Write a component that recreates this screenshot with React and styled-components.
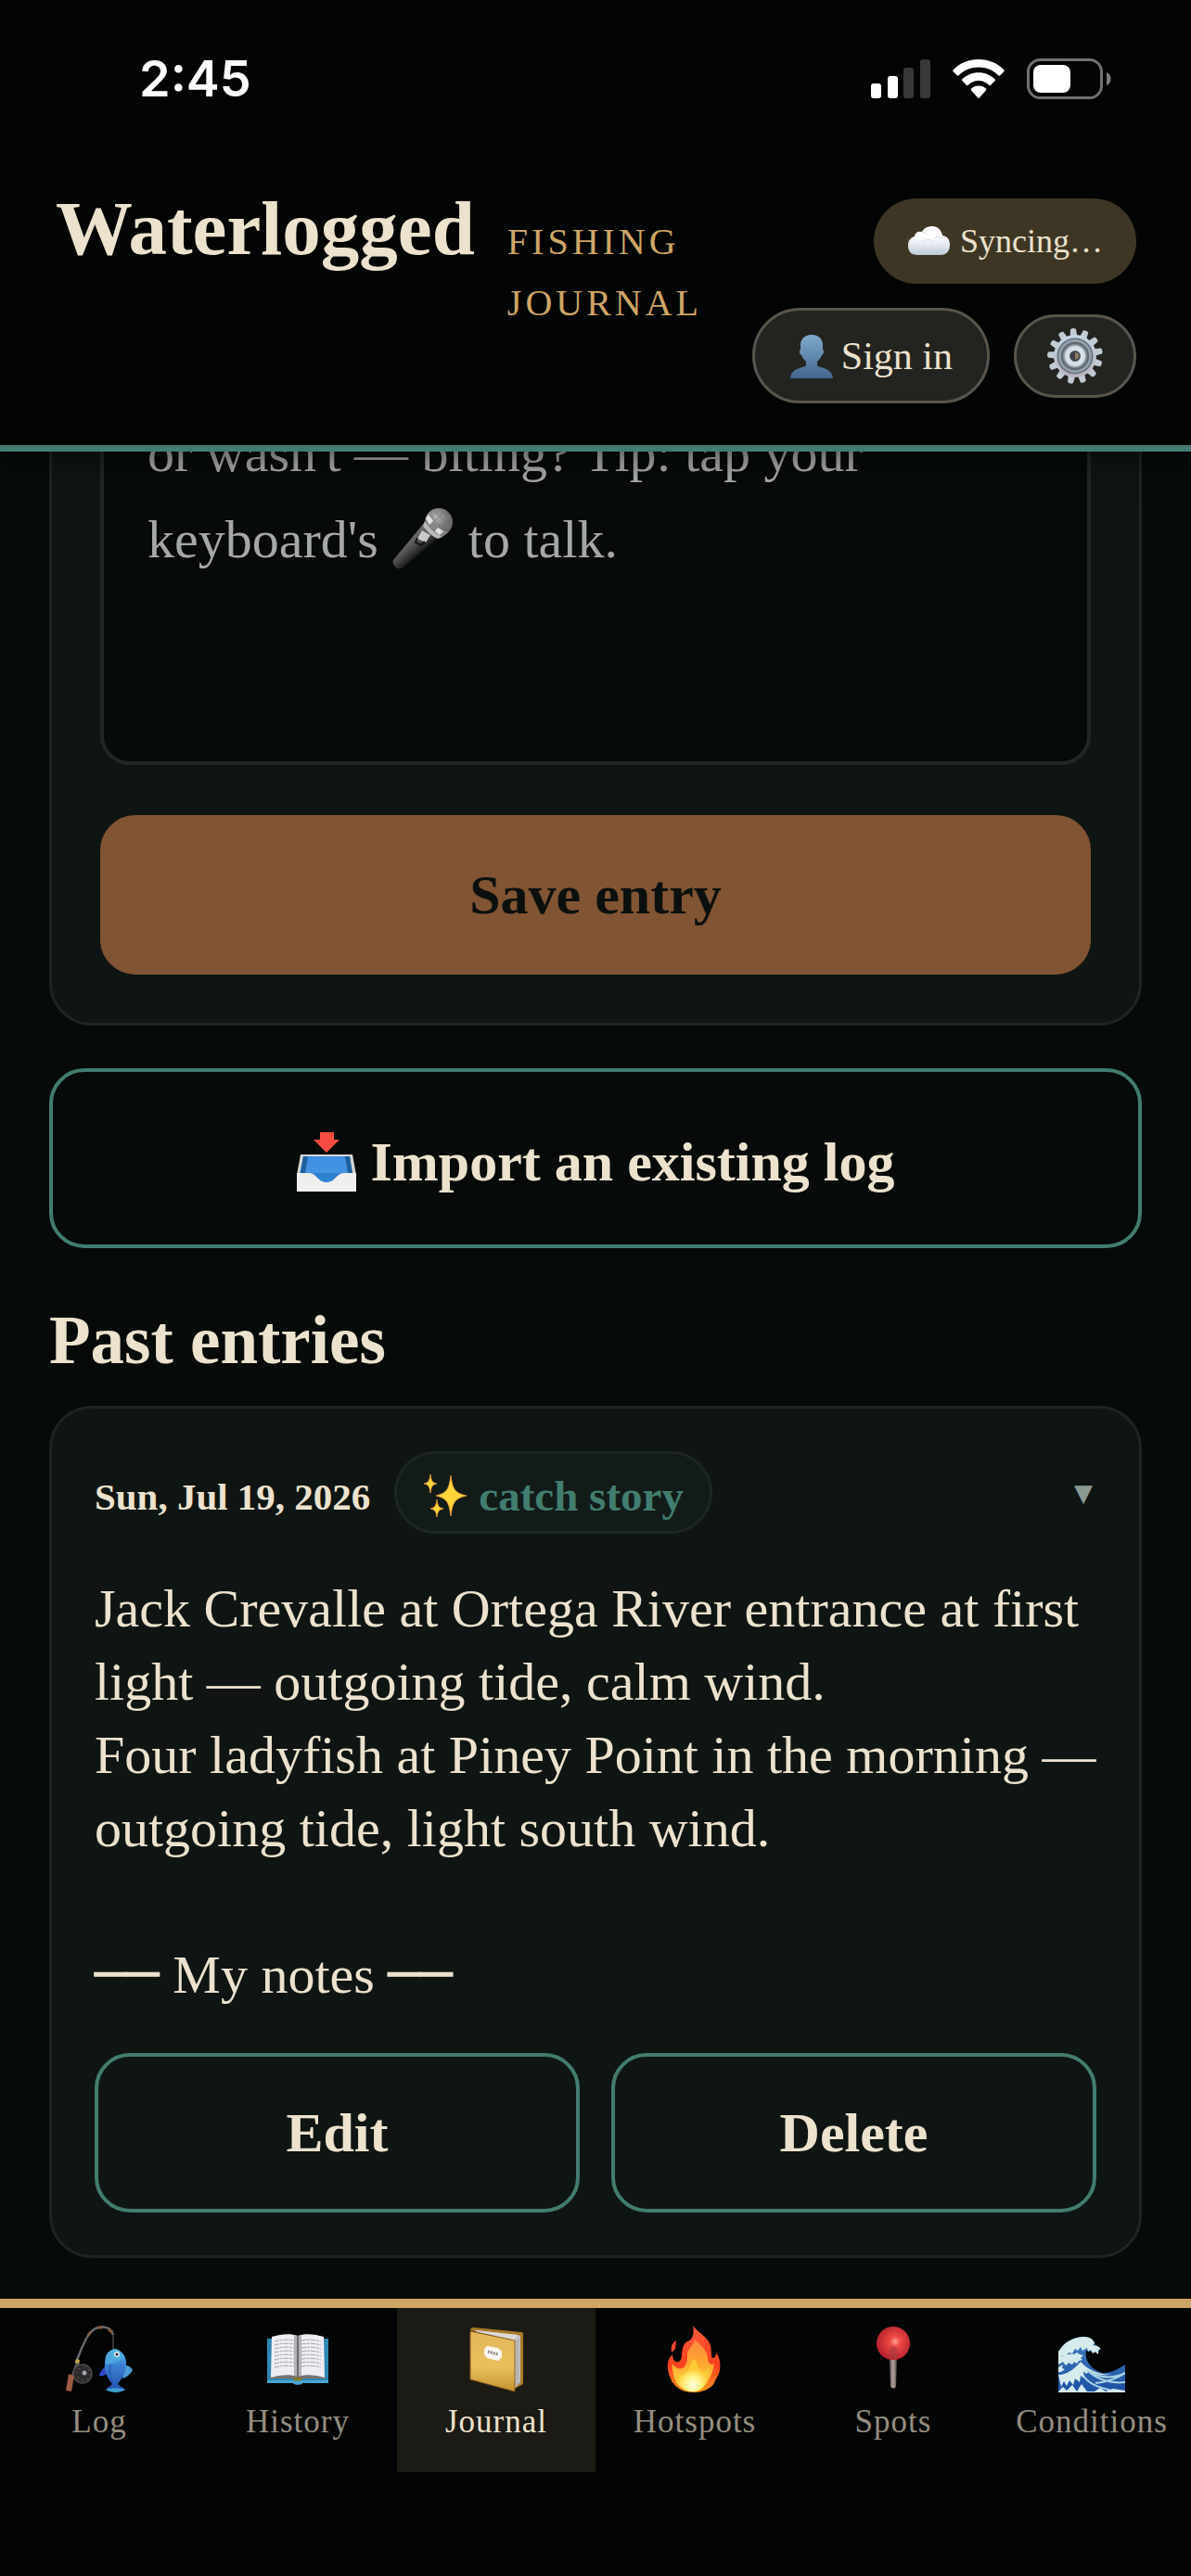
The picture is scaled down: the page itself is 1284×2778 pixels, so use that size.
import React, { useState } from 'react';
import styled, { createGlobalStyle } from 'styled-components';

const GlobalStyle = createGlobalStyle`
   *, *::before, *::after {
      box-sizing: border-box;
   }
   body {
      margin: 0;
      background: #060a09;
   }
   button, textarea {
      font: inherit;
      color: inherit;
      margin: 0;
   }
   svg {
      display: block;
      flex-shrink: 0;
   }
`

const Shell = styled.div`
   display: flex;
   flex-direction: column;
   height: 100vh;
   overflow: hidden;
   background: #060a09;
   color: #ece2cd;
   font-family: "Liberation Serif", "Times New Roman", serif;
`

/* ---------- header ---------- */

const Header = styled.header`
   position: relative;
   z-index: 1;
   background: #030504;
   border-bottom: 7px solid #427d6f;
   box-shadow: 0 6px 30px rgba(0, 0, 0, 0.5);
`
const StatusBar = styled.div`
   display: flex;
   align-items: center;
   justify-content: space-between;
   height: 170px;
   padding: 0 86px 0 150px;
   color: #fff;
   font: 600 54px/64px Inter, sans-serif;
`
const StatusIcons = styled.div`
   display: flex;
   align-items: center;
   gap: 24px;
`
const HeaderRow = styled.div`
   display: flex;
   align-items: flex-start;
   justify-content: space-between;
   padding: 44px 59px 45px 60px;
`
const Brand = styled.div`
   display: flex;
   align-items: baseline;
   gap: 35px;
`
const Title = styled.h1`
   margin: 0;
   font-size: 83px;
   line-height: 64px;
   font-weight: 700;
`
const Tagline = styled.span`
   width: min-content;
   color: #cfa666;
   font-size: 40px;
   line-height: 66px;
   letter-spacing: 4px;
   text-transform: uppercase;
`
const Actions = styled.div`
   display: flex;
   flex: 0 1 440px;
   flex-wrap: wrap;
   align-items: center;
   justify-content: flex-end;
   gap: 26px;
`
const SyncPill = styled.div`
   display: flex;
   align-items: center;
   gap: 10px;
   height: 92px;
   padding: 0 36px;
   border-radius: 46px;
   background: #3e3624;
   font-size: 36px;
   line-height: 48px;
`
const PillButton = styled.button`
   display: flex;
   align-items: center;
   justify-content: center;
   gap: 8px;
   height: ${props => props.$icon ? 90 : 103}px;
   padding: 0 ${props => props.$icon ? 32 : 37}px;
   border: 3px solid #59554b;
   border-radius: 52px;
   background: #232420;
   font-size: 42px;
   line-height: 48px;
`

/* ---------- content ---------- */

const Main = styled.main`
   display: flex;
   flex: 1;
   flex-direction: column;
   justify-content: flex-end;
   min-height: 0;
   overflow: hidden;
   padding: 0 53px 44px;
`
const Card = styled.section`
   flex-shrink: 0;
   padding: ${props => props.$pad}px;
   border: 3px solid #1d2523;
   border-radius: 46px;
   background: #0f1513;
`
const Field = styled.div`
   position: relative;
   margin-bottom: 54px;
   font-size: 58px;
   line-height: 93px;
`
const NoteInput = styled.textarea`
   display: block;
   width: 100%;
   height: 434px;
   padding: 47px;
   border: 4px solid #202725;
   border-radius: 32px;
   outline: none;
   background: #060a09;
   resize: none;
`
const Hint = styled.div`
   position: absolute;
   inset: 51px 47px auto 51px;
   color: #a6a8a6;
   pointer-events: none;

   svg {
      display: inline-block;
      height: 68px;
      margin: 0;
      vertical-align: -14px;
   }
`
const Button = styled.button`
   display: flex;
   flex: 1;
   align-items: center;
   justify-content: center;
   gap: 14px;
   width: 100%;
   height: 172px;
   border: 4px solid #427d6f;
   border-radius: 38px;
   background: transparent;
   font-size: 60px;
   line-height: 72px;
   font-weight: 700;
`
const SaveButton = styled(Button)`
   border-color: #815433;
   background: #815433;
   color: #0b100e;
`
const ImportButton = styled(Button)`
   flex: none;
   height: 194px;
   margin-top: 46px;
   padding-top: 8px;
`
const SectionTitle = styled.h2`
   margin: 56px 0 26px;
   font-size: 73px;
   line-height: 88px;
   font-weight: 700;
`
const EntryHead = styled.div`
   display: flex;
   align-items: center;
   gap: 26px;
   margin-bottom: 41px;
   font-weight: 700;
`
const EntryDate = styled.time`
   padding-top: 8px;
   font-size: 41px;
   line-height: 48px;
`
const Chip = styled.span`
   display: flex;
   align-items: center;
   gap: 12px;
   height: 89px;
   padding: 6px 28px 0;
   border: 3px solid #1d2624;
   border-radius: 45px;
   background: #131b19;
   color: #417e6f;
   font-size: 47px;
   line-height: 54px;
`
const Toggle = styled.button`
   margin-left: auto;
   padding: 0 4px;
   border: 0;
   background: none;
   color: #8a9a93;
   font: 26px/32px "DejaVu Sans", sans-serif;
`
const EntryText = styled.p`
   margin: 0 0 45px;
   font-size: 58px;
   line-height: 79px;
   white-space: pre-line;
`
const Rule = styled.span`
   font-family: "DejaVu Sans Mono", monospace;
   font-weight: 700;
   line-height: 0;
`
const EntryActions = styled.div`
   display: flex;
   gap: 34px;
`

/* ---------- bottom tabs ---------- */

const TabBar = styled.nav`
   display: flex;
   padding-bottom: 112px;
   border-top: 10px solid #cfa666;
   background: #030504;
`
const Tab = styled.button`
   display: flex;
   flex: 1 1 0;
   flex-direction: column;
   align-items: center;
   gap: 10px;
   padding: 19px 0 32px;
   border: 0;
   background: ${props => props.$active ? '#1c1a14' : 'transparent'};
   color: ${props => props.$active ? '#ece2cd' : '#958e80'};
   font-size: 35px;
   line-height: 44px;
   letter-spacing: 1px;
`

/* ---------- drawings ---------- */

const Signal = () => (
   <svg width="64" height="42" viewBox="0 0 64 42">
      <rect x="0" y="26" width="11" height="16" rx="3" fill="#fff" />
      <rect x="18" y="18" width="11" height="24" rx="3" fill="#fff" />
      <rect x="35" y="9" width="11" height="33" rx="3" fill="#373938" />
      <rect x="53" y="0" width="11" height="42" rx="3" fill="#373938" />
   </svg>
)

const Wifi = () => (
   <svg width="56" height="42" viewBox="0 0 56 42" fill="#fff">
      <path d="M28 0C17 0 7.500 4.200.700 11.200c-.6.600-.6 1.400 0 2l4 4c.6.600 1.400.6 2 0C12.200 11.700 19.700 8.600 28 8.600s15.800 3.100 21.300 8.600c.6.600 1.400.6 2 0l4-4c.6-.6.600-1.400 0-2C48.500 4.200 39 0 28 0z" />
      <path d="M28 14.300c-6.900 0-13 2.700-17.500 7-.6.600-.6 1.400 0 2l4.300 4.400c.6.600 1.400.6 2 0 3-2.900 6.900-4.600 11.200-4.600s8.200 1.700 11.200 4.600c.6.600 1.400.6 2 0l4.300-4.400c.6-.6.600-1.400 0-2-4.500-4.300-10.600-7-17.500-7z" />
      <path d="M28 28.600c-3 0-5.800 1.100-7.900 3-.6.500-.6 1.300 0 1.900l6.900 7.800c.6.700 1.400.7 2 0l6.900-7.800c.6-.6.600-1.400 0-1.900-2.100-1.900-4.900-3-7.900-3z" />
   </svg>
)

const Battery = () => (
   <svg width="91" height="44" viewBox="0 0 91 44">
      <rect x="1.500" y="1.500" width="79" height="41" rx="13" fill="none" stroke="#6f706f" strokeWidth="3" />
      <rect x="7" y="7" width="40" height="30" rx="8" fill="#fff" />
      <path d="M86 15c6 2 6 12 0 14z" fill="#7c7d7c" />
   </svg>
)

const Cloud = () => (
   <svg width="47" height="48" viewBox="0 0 47 48">
      <defs>
         <linearGradient id="cloud" x1="0" y1="0" x2="0" y2="1">
            <stop offset="0.400" stopColor="#fdfdfe" />
            <stop offset="1" stopColor="#bccad8" />
         </linearGradient>
      </defs>
      <path d="M11 39C4 39 1 35 1 29c0-6 3-9 7-10 0-4 4-6 8-5 2-4 6-6 11-6 6 0 10 4 11 10 6 1 8 5 8 10 0 7-4 11-10 11z" fill="url(#cloud)" />
      <path d="M17 24c3-2 8-2 11 0M30 21c3-2 6-2 8 0M16 14c2 0 4 1 5 3" fill="none" stroke="#dce4ec" strokeWidth="1.500" />
   </svg>
)

const Person = () => (
   <svg width="48" height="48" viewBox="0 0 48 48">
      <defs>
         <linearGradient id="person" x1="0" y1="0" x2="0" y2="1">
            <stop offset="0" stopColor="#7fa9cb" />
            <stop offset="1" stopColor="#43668f" />
         </linearGradient>
      </defs>
      <path d="M24 1c8 0 12 5 12 11v5c2 1 1 5-1 6-1 3-3 5-5 7v4c2 3 16 2 17 14H1c1-12 15-11 17-14v-4c-2-2-4-4-5-7-2-1-3-5-1-6v-5C12 6 16 1 24 1z" fill="url(#person)" />
   </svg>
)

const gearTeeth = [0, 1, 2, 3, 4, 5, 6, 7, 8, 9, 10, 11, 12]

const Gear = () => (
   <svg width="62" height="62" viewBox="0 0 62 62">
      <defs>
         <linearGradient id="gear" x1="0" y1="0" x2="0" y2="1">
            <stop offset="0" stopColor="#c4d7e6" />
            <stop offset="1" stopColor="#bcb3bf" />
         </linearGradient>
      </defs>
      <g fill="#c2cad4">
         {gearTeeth.map(i => (
            <path key={i} d="M27 12l1-10q3-2 6 0l1 10z" transform={`rotate(${i * 27.69 - 4} 31 31)`} />
         ))}
      </g>
      <circle cx="31" cy="31" r="23" fill="url(#gear)" />
      <circle cx="31" cy="31" r="19.500" fill="#606e79" />
      <circle cx="31" cy="31" r="18" fill="#93a0aa" />
      <circle cx="31" cy="31" r="14" fill="none" stroke="#606a74" strokeWidth="2.500" />
      <circle cx="31" cy="31" r="8.500" fill="#6d7983" stroke="#d9dfe6" strokeWidth="5" />
      <circle cx="31" cy="31" r="5.500" fill="#3f4347" />
      <path d="M31 27c3 0 5 2 4 6l-4 2z" fill="#8b7b63" />
   </svg>
)

const Microphone = () => (
   <svg width="68" height="68" viewBox="0 0 68 68" aria-hidden="true">
      <defs>
         <linearGradient id="micBody" gradientUnits="userSpaceOnUse" x1="18" y1="36" x2="30" y2="50">
            <stop offset="0" stopColor="#6a6a6a" />
            <stop offset="0.500" stopColor="#4a4949" />
            <stop offset="1" stopColor="#1b1b1b" />
         </linearGradient>
         <radialGradient id="micHead" cx="0.400" cy="0.350">
            <stop offset="0" stopColor="#b5b5b5" />
            <stop offset="1" stopColor="#686868" />
         </radialGradient>
      </defs>
      <path d="M36 16L2 57c-2 5 4 11 9 9l41-34z" fill="url(#micBody)" />
      <circle cx="51" cy="16" r="15" fill="url(#micHead)" />
      <path d="M42 8l16 20M47 4l16 18M53 2l12 13M47 25l17-17M43 19l15-16M53 28l13-13" stroke="#7b7b7b" strokeWidth="1" />
      <path d="M37 12l3-5c5 11 12 17 21 20l-6 5c-8-4-14-10-18-20z" fill="#878787" />
      <path d="M36 15l-2 5c5 7 9 11 16 14l5-2c-8-4-14-9-19-17z" fill="#b9b9b9" />
      <path d="M40 8l5 7-4 4-4-7zM50 22l6 4-4 4-5-4z" fill="#e2e2e2" />
      <path d="M33 25l9 5-5 8-9-4z" fill="#c9c9c9" />
      <path d="M28 33l-2 5 6 3 4-4" fill="none" stroke="#161616" strokeWidth="2" />
   </svg>
)

const Inbox = () => (
   <svg width="66" height="66" viewBox="0 0 66 66">
      <defs>
         <linearGradient id="inbox" x1="0" y1="0" x2="0" y2="1">
            <stop offset="0" stopColor="#3f8fe2" />
            <stop offset="0.600" stopColor="#4695e4" />
            <stop offset="0.650" stopColor="#2a7bca" />
            <stop offset="1" stopColor="#3389da" />
         </linearGradient>
      </defs>
      <path d="M26 1h15v8h6L33 23 19 9h7z" fill="#f74c42" />
      <path d="M5 25h56l4 22H1z" fill="#d3d5d3" />
      <path d="M8 27h50l3 20-16 9H21L4 46z" fill="url(#inbox)" />
      <path d="M8 27L5 45h5l3-18zM58 27l3 18h-5l-3-18z" fill="#1d5f9f" />
      <path d="M1 45h13c9 0 9 10 19 10s10-10 19-10h13v20H1z" fill="#f0efed" />
   </svg>
)

const Sparkles = () => (
   <svg width="48" height="48" viewBox="0 0 48 48" fill="#fdd43a" stroke="#e9993c" strokeWidth="0.800">
      <path d="M30 2c2 15 4 19 17 22-13 3-15 7-17 22-2-15-4-19-16-22 12-3 14-7 16-22z" />
      <path d="M8 1c1 7 2 9 7 10-5 1-6 3-7 10-1-7-2-9-7-10 5-1 6-3 7-10z" />
      <path d="M15 28c1 7 2 9 7 10-5 1-6 3-7 9-1-6-2-8-7-9 5-1 6-3 7-10z" />
   </svg>
)

const FishingPole = () => (
   <svg width="72" height="72" viewBox="0 0 72 72">
      <defs>
         <linearGradient id="fish" x1="0" y1="0" x2="0" y2="1">
            <stop offset="0" stopColor="#5cb9e6" />
            <stop offset="0.400" stopColor="#3b7fd2" />
            <stop offset="1" stopColor="#2350ae" />
         </linearGradient>
      </defs>
      <path d="M11 40C16 26 20 15 26 8c7-9 22-9 25 2" fill="none" stroke="#666a70" strokeWidth="2.500" />
      <path d="M24 10l3-3M35 2h4M46 4l4 3" stroke="#8b5a35" strokeWidth="3" />
      <path d="M51 9v18" stroke="#6a6d72" strokeWidth="1" />
      <path d="M11 39l4 1-3 9-3 6-3-2z" fill="#55585a" />
      <path d="M11 36l4 1-1 4-4-1z" fill="#c5a44b" />
      <circle cx="18" cy="52" r="10" fill="#2b2a2c" stroke="#4d4b4d" strokeWidth="1.500" />
      <circle cx="19" cy="52" r="7" fill="none" stroke="#735048" strokeWidth="1.500" strokeDasharray="1.500 4" />
      <circle cx="20" cy="51" r="2.500" fill="#9fa8b0" />
      <path d="M3 52l6 2-3 17-6-1z" fill="#9c5b42" />
      <path d="M42 44c-3 5-6 6-6 10 4 1 7-1 9-3z" fill="#3247c8" />
      <path d="M64 43c3 0 6 1 8 5-3 5-7 8-11 9z" fill="#4d9dd8" />
      <path d="M53 25c8 2 13 9 12 18-1 10-5 14-9 20 3 3 7 4 8 6-7 3-15 3-21 0 1-2 4-3 7-6-5-7-9-13-8-23 0-8 3-13 11-15z" fill="url(#fish)" />
      <path d="M43 41c1-7 3-12 10-16 5 1 7 4 10 8-5 6-12 9-20 8z" fill="#4fb0df" opacity="0.700" />
      <path d="M48 42c-2 7-1 13 3 19" fill="none" stroke="#2862b8" strokeWidth="2" />
      <path d="M43 69c5-2 16-2 21 0-6 4-15 4-21 0z" fill="#3aa0cf" />
      <circle cx="55" cy="31" r="3" fill="#e6efe9" />
      <circle cx="55" cy="31" r="1.500" fill="#1a2338" />
   </svg>
)

const bookLines = [16, 20, 24, 28, 32, 36, 40, 44]

const OpenBook = () => (
   <svg width="72" height="72" viewBox="0 0 72 72">
      <path d="M3 14h66v48H41c-1 2-9 2-10 0H3z" fill="#2f86b5" />
      <path d="M3 59h66v3H41c-1 2-9 2-10 0H3z" fill="#4aa6d2" />
      <path d="M7 53h58l1 4H42c-2 3-10 3-12 0H6z" fill="#77736e" />
      <path d="M8 12c9-3 21-4 28-1v44c-8-3-20-2-29 1z" fill="#eeedf3" />
      <path d="M64 12c-9-3-21-4-28-1v44c8-3 20-2 29 1z" fill="#eeedf3" />
      <path d="M32 10c3 0 4 1 4 2 0-1 1-2 4-2v44c-3 0-4 1-4 1s-1-1-4-1z" fill="#8d8b92" opacity="0.600" />
      <path d="M36 11v45" stroke="#55535a" strokeWidth="1.500" />
      {bookLines.map(y => (
         <path key={y} d={`M11 ${y + 1}q10-3 21-1M40 ${y}q10-2 21 1`} fill="none" stroke="#a2a0a8" strokeWidth="1" strokeDasharray="5 1 3 1" />
      ))}
      <path d="M31 58c1-3 9-3 10 0-2 3-8 3-10 0z" fill="#7e7c22" />
      <path d="M33 60q3 2 6 0" stroke="#4aa6d2" strokeWidth="3" fill="none" />
   </svg>
)

const Notebook = () => (
   <svg width="72" height="72" viewBox="0 0 72 72">
      <defs>
         <linearGradient id="cover" x1="0" y1="0" x2="0" y2="1">
            <stop offset="0" stopColor="#e3b75a" />
            <stop offset="0.600" stopColor="#e9c05c" />
            <stop offset="1" stopColor="#c4922f" />
         </linearGradient>
      </defs>
      <path d="M12 2l51 5c2 0 2 1 2 2v54l-9 5-8-5V14L8 5c0-2 2-3 4-3z" fill="#a87a2b" />
      <path d="M13 5l46 5c3 1 3 1 3 3v48l-6 6V16L15 7z" fill="#c9c8c9" />
      <path d="M13 5l46 5-4 6z" fill="#dcdad8" />
      <path d="M60 13v50M58 15v49" stroke="#9b9a9b" strokeWidth="0.800" />
      <path d="M8 6l48 10v55L8 58z" fill="url(#cover)" stroke="#8d5d20" strokeWidth="1" />
      <path d="M26 22l12 2 4 4v6l-4 4-12-3-3-4v-6z" fill="#f8f6f0" />
      <path d="M27 28l11 3" stroke="#8d8a88" strokeWidth="3" strokeDasharray="2 1" />
   </svg>
)

const Fire = () => (
   <svg width="72" height="72" viewBox="0 0 72 72">
      <defs>
         <linearGradient id="flame" x1="0" y1="0" x2="0" y2="1">
            <stop offset="0" stopColor="#ff5a36" />
            <stop offset="0.600" stopColor="#f8401f" />
            <stop offset="1" stopColor="#fc9a1c" />
         </linearGradient>
         <linearGradient id="flameMid" x1="0" y1="0" x2="0" y2="1">
            <stop offset="0" stopColor="#ff8440" />
            <stop offset="0.500" stopColor="#ffa82f" />
            <stop offset="1" stopColor="#ffe14a" />
         </linearGradient>
         <radialGradient id="flameCore" cy="0.800">
            <stop offset="0" stopColor="#fffde2" />
            <stop offset="0.500" stopColor="#fff48a" />
            <stop offset="1" stopColor="#ffc934" />
         </radialGradient>
      </defs>
      <path d="M34 0c4 6 14 11 18 19 3 7 1 13 3 16 3 0 4-3 4-6 4 5 5 12 4 18 0 5-4 9-6 15-3 5-11 10-22 10s-18-4-22-10L9 60l3 1c-4-7-6-14-5-21 1-5 3-7 5-9 0 6 3 9 6 8 7-1 1-17 10-22 5-1 8-8 6-17z" fill="url(#flame)" />
      <path d="M16 16l-1 9-4 4c-1-6 0-10 5-13z" fill="#f4482f" />
      <path d="M35 14c6 6 14 11 15 21 0 6 4 8 7 6-1 7-3 12-6 17-3 7-9 13-17 13s-18-6-20-15c-1-6-3-8-2-15 3 5 8 7 12 4 7-6 1-15 7-21 3-4 5-5 4-10z" fill="url(#flameMid)" />
      <path d="M35 36c5 5 4 11 9 13 4 1 5-1 7-3-1 15-7 25-17 25-11 0-16-8-17-20 4 4 8 2 11-2 3-4 3-8 7-13z" fill="url(#flameCore)" />
   </svg>
)

const Pin = () => (
   <svg width="72" height="72" viewBox="0 0 72 72">
      <defs>
         <radialGradient id="pin" cx="0.560" cy="0.450">
            <stop offset="0" stopColor="#ffa09a" />
            <stop offset="0.300" stopColor="#ef4a44" />
            <stop offset="1" stopColor="#bd2630" />
         </radialGradient>
         <linearGradient id="needle">
            <stop offset="0" stopColor="#5e5756" />
            <stop offset="0.500" stopColor="#b5a39e" />
            <stop offset="1" stopColor="#4b4444" />
         </linearGradient>
      </defs>
      <path d="M32 34h8l-1 32q-3 3-6 0z" fill="url(#needle)" />
      <circle cx="36" cy="19" r="18" fill="url(#pin)" />
      <path d="M32 24q4-3 8 0v11q-4 2-8 0z" fill="#a43a42" opacity="0.600" />
   </svg>
)

const Wave = () => (
   <svg width="72" height="72" viewBox="0 0 72 72">
      <defs>
         <linearGradient id="sea" x1="0" y1="0" x2="0" y2="1">
            <stop offset="0" stopColor="#3f7ebd" />
            <stop offset="1" stopColor="#1d50a3" />
         </linearGradient>
      </defs>
      <path d="M0 28C7 17 17 12 28 12c6 1 10 3 11 8l6 4-2 6-7-2-6-1c-2 10 5 21 18 24 10 0 18-5 24-9v30H0z" fill="url(#sea)" />
      <path d="M0 28C7 17 17 12 28 12c6 0 10 3 11 7l-2 2 5 1 4 3-3 1v5l-3-3-3 2-2-4-3 2-1-4-5 3-2-4-3 4-3-2-3 5-4-1-3 5-4-2-5 4z" fill="#d6ebec" />
      <path d="M0 34c4-3 6 0 8-3 4 1 6-2 9 0l3-2 3 2 4 1-3 3 2 2-4 1-2 3-3-2-2 3-4-2-3 3-3-4-5 3zM0 45l5-3-1 4 3 1-4 3H0z" fill="#d6ebec" />
      <path d="M0 53c9 0 17-6 24-14 8 9 22 15 34 13-10 3-18 0-24-3l-4 3-3-3 1 8-4-3-1 7-5-4-2 7-4-5-3 6-3-5-3 6z" fill="#d6ebec" />
      <path d="M31 48c10 10 26 15 41 13M27 54c6 10 20 13 30 16M40 62c9-1 22-4 32-11M34 50c15 8 28 6 38 1" fill="none" stroke="#a9d4e4" strokeWidth="2" />
      <path d="M0 71l5-5 4 4 6-6 5 7 5-8 6 8h8l6-4 6 4 8-3 13 2v2H0z" fill="#d6ebec" />
   </svg>
)

const tabs = [
   { name: 'Log', Icon: FishingPole },
   { name: 'History', Icon: OpenBook },
   { name: 'Journal', Icon: Notebook },
   { name: 'Hotspots', Icon: Fire },
   { name: 'Spots', Icon: Pin },
   { name: 'Conditions', Icon: Wave },
]

const entry = {
   date: 'Sun, Jul 19, 2026',
   tag: 'catch story',
   text: `Jack Crevalle at Ortega River entrance at first light — outgoing tide, calm wind.
Four ladyfish at Piney Point in the morning — outgoing tide, light south wind.\n\n`,
}

const App = () => {
   const [active, setActive] = useState('Journal');
   const [note, setNote] = useState('');

   return (
      <Shell>
         <GlobalStyle />
         <Header>
            <StatusBar>
               <span>2:45</span>
               <StatusIcons>
                  <Signal />
                  <Wifi />
                  <Battery />
               </StatusIcons>
            </StatusBar>
            <HeaderRow>
               <Brand>
                  <Title>Waterlogged</Title>
                  <Tagline>Fishing Journal</Tagline>
               </Brand>
               <Actions>
                  <SyncPill><Cloud />Syncing…</SyncPill>
                  <PillButton><Person />Sign in</PillButton>
                  <PillButton $icon aria-label="Settings"><Gear /></PillButton>
               </Actions>
            </HeaderRow>
         </Header>

         <Main>
            <Card $pad={52}>
               <Field>
                  <NoteInput
                     aria-label="Journal entry"
                     value={note}
                     onChange={e => setNote(e.target.value)}
                  />
                  {!note && (
                     <Hint>
                        or wasn't — biting? Tip: tap your<br />
                        keyboard's <Microphone /> to talk.
                     </Hint>
                  )}
               </Field>
               <SaveButton>Save entry</SaveButton>
            </Card>

            <ImportButton><Inbox />Import an existing log</ImportButton>

            <SectionTitle>Past entries</SectionTitle>
            <Card $pad={46}>
               <EntryHead>
                  <EntryDate dateTime="2026-07-19">{entry.date}</EntryDate>
                  <Chip><Sparkles />{entry.tag}</Chip>
                  <Toggle aria-label="Collapse entry">▼</Toggle>
               </EntryHead>
               <EntryText>
                  {entry.text}
                  <Rule>──</Rule> My notes <Rule>──</Rule>
               </EntryText>
               <EntryActions>
                  <Button>Edit</Button>
                  <Button>Delete</Button>
               </EntryActions>
            </Card>
         </Main>

         <TabBar>
            {tabs.map(({ name, Icon }) => (
               <Tab key={name} $active={name === active} onClick={() => setActive(name)}>
                  <Icon />
                  {name}
               </Tab>
            ))}
         </TabBar>
      </Shell>
   );
}

export default App
